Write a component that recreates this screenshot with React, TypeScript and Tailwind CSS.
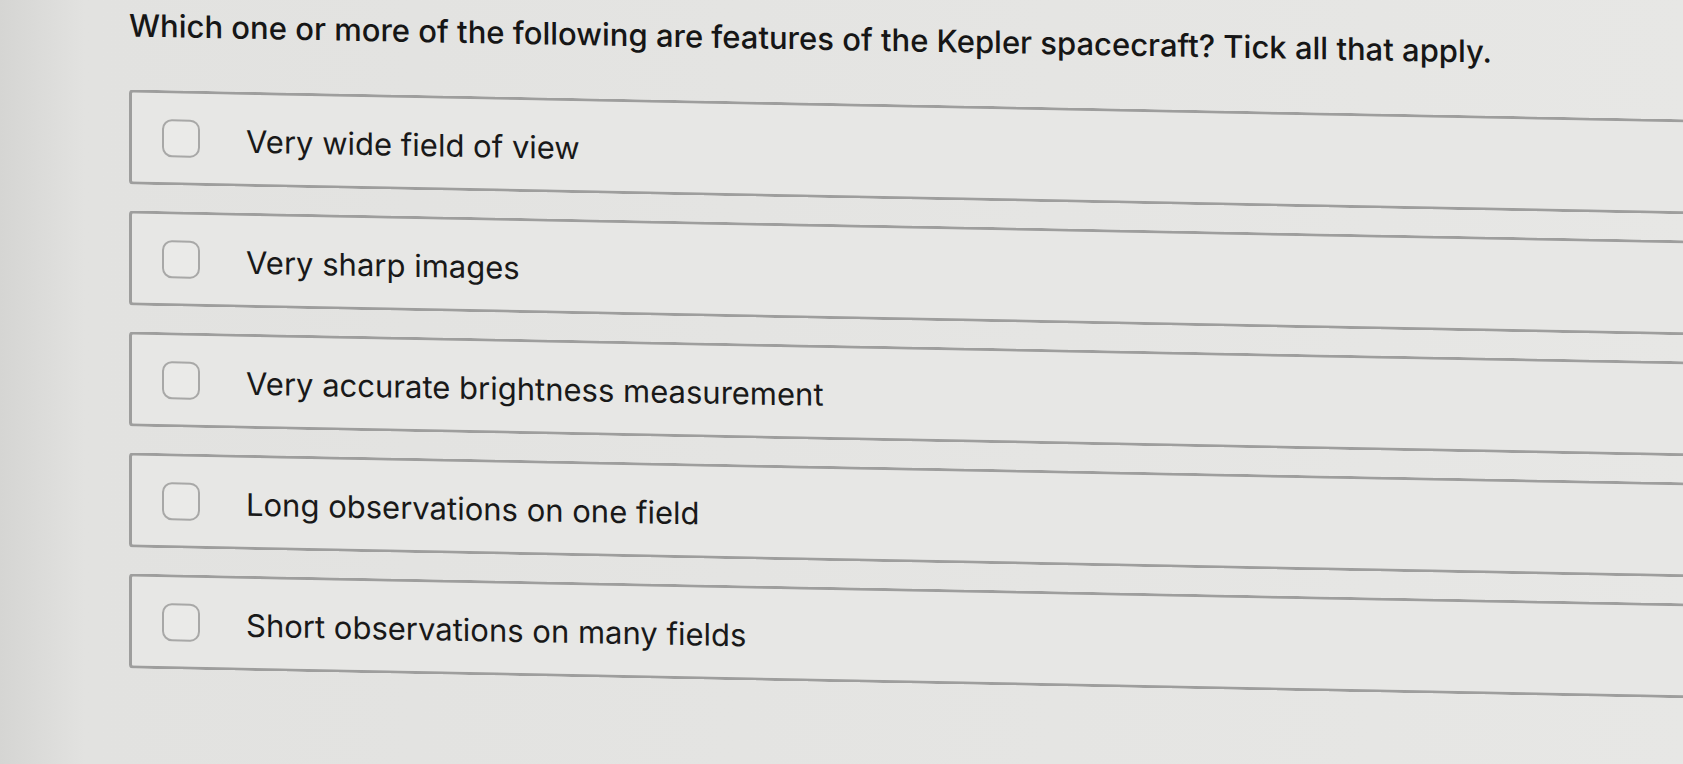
const OPTIONS = [
  "Very wide field of view",
  "Very sharp images",
  "Very accurate brightness measurement",
  "Long observations on one field",
  "Short observations on many fields",
];

function Option({ label }: { label: string }) {
  return (
    <label className="flex h-[95px] items-center rounded-l-[4px] border-[3px] border-r-0 border-[#9e9e9d] bg-[#e7e7e5] pl-[30px] cursor-pointer">
      <span className="h-[38px] w-[38px] shrink-0 rounded-[10px] border-2 border-[#a8a8a7] bg-[#eaeae8]" />
      <span className="ml-[46px] pt-[4px] text-[31px] leading-[36px] text-[#191919]">{label}</span>
    </label>
  );
}

export default function App() {
  return (
    <div
      className="h-screen w-full overflow-hidden bg-linear-to-r from-[#d5d5d3] from-0% via-[#e2e2e0] via-5% to-[#e7e7e5] to-100%"
      style={{ fontFamily: "Inter, 'Liberation Sans', sans-serif" }}
    >
      <div className="origin-top-left skew-y-[1.1deg] pt-[4px] pl-[129px]">
        {/* Question */}
        <h1 className="text-[31px] font-medium leading-[37px] text-[#161616]">
          Which one or more of the following are features of the Kepler spacecraft? Tick all that apply.
        </h1>

        {/* Answers */}
        <div className="mt-[46px] flex flex-col gap-[26px]">
          {OPTIONS.map((o) => (
            <Option key={o} label={o} />
          ))}
        </div>
      </div>
    </div>
  );
}
